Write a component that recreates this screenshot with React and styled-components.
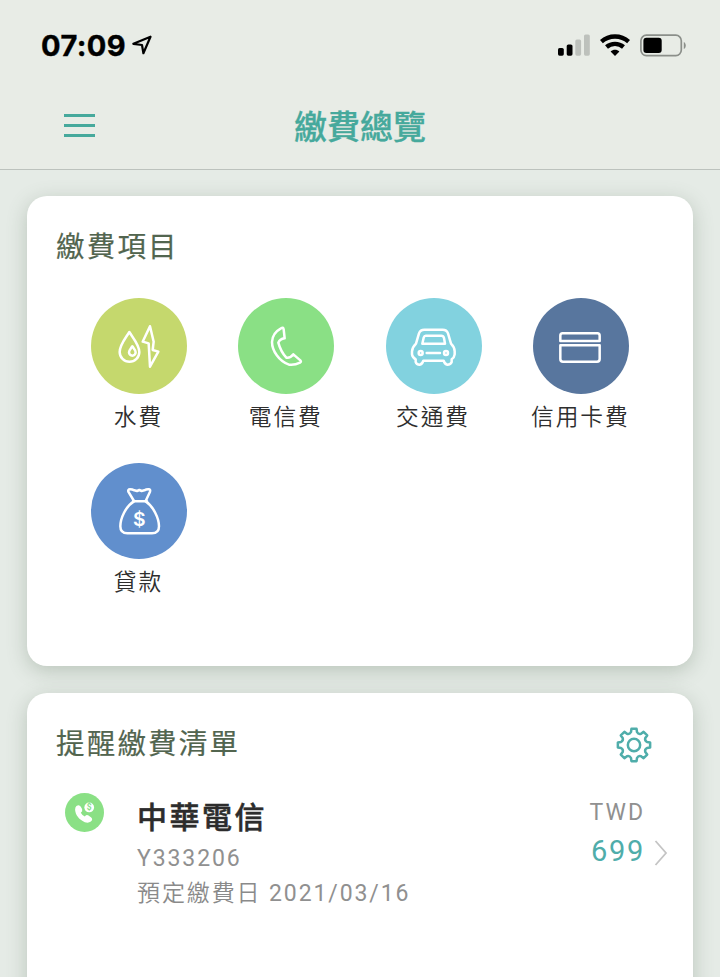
import styled, { createGlobalStyle } from 'styled-components';

const GlobalStyle = createGlobalStyle`
  * {
    box-sizing: border-box;
  }
  html, body {
    margin: 0;
    height: 977px;
    overflow: hidden;
    background: #e5ebe6;
    font-family: Roboto, 'Noto Sans CJK TC', sans-serif;
  }
  svg {
    display: block;
    flex: none;
  }
`;

const Screen = styled.div`
  width: 720px;
  height: 977px;
  overflow: hidden;
`;

const Header = styled.header`
  height: 170px;
  background: #e8ece6;
  border-bottom: 1.5px solid #bcc2bd;
`;

const StatusBar = styled.div`
  display: flex;
  align-items: center;
  height: 90px;
  padding: 0 34px 0 41px;
`;

const Clock = styled.span`
  width: 91px;
  padding-top: 2px;
  font: 700 29px/34px Inter, sans-serif;
  letter-spacing: 0.4px;
  -webkit-text-stroke: 0.4px #000;
  color: #000;
`;

const StatusIcons = styled.div`
  display: flex;
  align-items: center;
  gap: 10px;
  margin-left: auto;
`;

const NavBar = styled.div`
  display: grid;
  grid-template-columns: 160px 1fr 160px;
  align-items: center;
  height: 72px;
`;

const MenuButton = styled.button`
  display: flex;
  flex-direction: column;
  gap: 6.7px;
  width: 31px;
  margin: 0 0 1px 64px;
  padding: 0;
  border: 0;
  background: none;

  span {
    height: 3.4px;
    background: #46a99c;
  }
`;

const Title = styled.h1`
  margin: 0;
  padding-top: 4px;
  text-align: center;
  font-size: 33px;
  line-height: 48px;
  font-weight: 500;
  -webkit-text-stroke: 0.3px #46a99c;
  color: #46a99c;
`;

const Content = styled.main`
  display: flex;
  flex-direction: column;
  gap: 27px;
  padding: 26px 27px 0;
`;

const Card = styled.section`
  height: ${(props) => props.$height}px;
  padding: 31px 29px 0;
  border-radius: 20px;
  background: #fff;
  box-shadow: 0 5px 20px rgba(85, 110, 85, 0.3);
`;

const CardHead = styled.div`
  display: flex;
  align-items: center;
  justify-content: space-between;
  height: 42px;
  padding-right: 12px;
`;

const CardTitle = styled.h2`
  margin: 0;
  font-size: 28.5px;
  line-height: 42px;
  font-weight: 400;
  letter-spacing: 2.2px;
  -webkit-text-stroke: 0.2px #52654f;
  color: #52654f;
`;

const Tiles = styled.div`
  display: grid;
  grid-template-columns: repeat(4, 147.3px);
  grid-auto-rows: 165px;
  margin: 28.5px 0 0 9.3px;
`;

const Tile = styled.div`
  display: flex;
  flex-direction: column;
  align-items: center;
`;

const Circle = styled.div`
  width: 96px;
  height: 96px;
  border-radius: 50%;
  background: ${(props) => props.$color};
`;

const TileLabel = styled.span`
  margin: 7px 1px 0 0;
  font-size: 22.7px;
  line-height: 34px;
  font-weight: 350;
  letter-spacing: 2px;
  white-space: nowrap;
  color: #2e2e2e;
`;

const Bill = styled.div`
  display: grid;
  grid-template-columns: 72px 1fr auto 24px;
  margin: 27px 0 0 9px;
`;

const BillInfo = styled.div`
  padding-top: 2px;
`;

const BillName = styled.div`
  font-size: 30px;
  line-height: 46px;
  font-weight: 500;
  letter-spacing: 2.5px;
  -webkit-text-stroke: 0.5px #2c2c2c;
  color: #2c2c2c;
`;

const BillNote = styled.div`
  font-size: 23px;
  line-height: 35px;
  font-weight: 350;
  letter-spacing: 1.9px;
  color: #8a8a8a;

  span {
    font-weight: 400;
    color: #909090;
  }
`;

const Amount = styled.div`
  margin-right: -5px;
  padding-top: 2px;
  text-align: right;
  color: #909090;
  font-size: 23px;
  line-height: 36px;
  letter-spacing: 2px;

  strong {
    display: block;
    line-height: 40px;
    font-size: 29px;
    font-weight: 400;
    letter-spacing: 1.7px;
    color: #4fadaa;
  }
`;

const Arrow = styled.div`
  padding: 46px 0 0 14px;
`;

const LocationIcon = () => (
  <svg width="20" height="20" viewBox="0 0 20 20" fill="none" stroke="#000" strokeWidth="2.2" strokeLinejoin="round">
    <path d="M18.5 1.7 1.4 8.8 10 10 11.4 18.2Z" />
  </svg>
);

const SignalIcon = () => (
  <svg width="32" height="22" viewBox="0 0 32 22">
    <rect y="14" width="5.8" height="7.7" rx="1.6" />
    <rect x="8.7" y="10.4" width="5.8" height="11.3" rx="1.6" />
    <rect x="17.3" y="5.5" width="5.8" height="16.2" rx="1.6" fill="#bdc1bc" />
    <rect x="26" y="0.5" width="5.8" height="21.2" rx="1.6" fill="#bdc1bc" />
  </svg>
);

const WifiIcon = () => (
  <svg width="30" height="22" viewBox="0 0 30 22" fill="none" stroke="#000" strokeWidth="4.4">
    <path d="M1.4 7.6C9 .8 21 .8 28.6 7.6" />
    <path d="M6.5 13C11.3 8.8 18.7 8.8 23.5 13" />
    <path d="M10.6 17.4C13.2 15.2 16.8 15.2 19.4 17.4L15 22Z" fill="#000" stroke="none" />
  </svg>
);

const BatteryIcon = () => (
  <svg width="46" height="23" viewBox="0 0 46 23">
    <rect x="0.9" y="1.2" width="40.4" height="20.4" rx="5.5" fill="none" stroke="#8b8f8a" strokeWidth="1.7" />
    <rect x="3.4" y="3.8" width="18.3" height="15.2" rx="3" />
    <path d="M43.8 8v7c2.6-1 2.6-6 0-7Z" fill="#8b8f8a" />
  </svg>
);

const LineIcon = ({ children }) => (
  <svg
    width="96"
    height="96"
    viewBox="0 0 288 288"
    fill="none"
    stroke="#fff"
    strokeWidth="7.5"
    strokeLinejoin="round"
    strokeLinecap="round"
  >
    {children}
  </svg>
);

const UtilityIcon = () => (
  <LineIcon>
    <path d="M115 102C104 120 86 141 86 162a29.5 29.5 0 0 0 59 0C145 141 126 120 115 102Z" />
    <path d="M124 145C119 152 114 157 114 163a10 10 0 0 0 20 0C134 157 129 152 124 145Z" />
    <path d="M177 85 155 131 173 136 177 206 202 161 185 156 188 131Z" />
  </LineIcon>
);

const PhoneIcon = () => (
  <LineIcon>
    <path d="M129 91Q136 86 137 94L140 121Q125 123 121 134Q128 161 145 179Q157 181 166 169L187 187Q191 191 186 194Q170 202 153 200C123 190 102 158 102 132Q103 105 129 91Z" />
  </LineIcon>
);

const CarIcon = () => (
  <LineIcon>
    <path d="M115 95H170Q182 95 186 106L195 137Q206 148 206 160V169Q205 178 197 184V192Q194 200 184 200Q176 199 173 188H112Q109 199 101 200Q91 200 89 192V184Q79 178 78 169V160Q79 148 90 137L99 106Q103 95 115 95Z" />
    <path d="M119 113H166Q172 113 174 120L177 137H109L113 119Q115 113 119 113Z" />
    <circle cx="104" cy="165" r="6" />
    <circle cx="180" cy="165" r="6" />
    <path d="M122 165H162" />
  </LineIcon>
);

const CreditCardIcon = () => (
  <LineIcon>
    <path d="M82 129V113Q82 106 89 106H193Q200 106 200 113V129Z" />
    <path d="M82 142H200V183Q200 191 192 191H90Q82 191 82 183Z" />
  </LineIcon>
);

const LoanIcon = () => (
  <LineIcon>
    <path d="M126 115H168M129 114 112 86Q110 79 117 79Q124 79 130 82L138 84L145 81L152 84L160 82Q167 78 174 79Q179 80 177 86L164 114" />
    <path d="M129 115C104 130 88 166 88 190Q88 211 109 211H183Q204 211 204 190C204 166 187 130 164 115" />
    <text
      x="145"
      y="188"
      fill="#fff"
      stroke="none"
      textAnchor="middle"
      fontFamily="Inter"
      fontSize="58"
      fontWeight="600"
    >
      $
    </text>
  </LineIcon>
);

const toothPoint = (radius, degrees) => {
  const angle = (degrees * Math.PI) / 180;
  return `${(54 + radius * Math.sin(angle)).toFixed(1)} ${(54 - radius * Math.cos(angle)).toFixed(1)}`;
};

const gearPath = [0, 45, 90, 135, 180, 225, 270, 315]
  .map(
    (a) =>
      `${a ? 'L' : 'M'}${toothPoint(40, a - 13)}L${toothPoint(49, a - 9)}L${toothPoint(49, a + 9)}` +
      `L${toothPoint(40, a + 13)}Q${toothPoint(34, a + 22.5)} ${toothPoint(40, a + 32)}`
  )
  .join('');

const GearIcon = () => (
  <svg width="36" height="36" viewBox="0 0 108 108" fill="none" stroke="#4fadaa" strokeWidth="7.5" strokeLinejoin="round">
    <path d={`${gearPath}Z`} />
    <circle cx="54" cy="54" r="18.5" />
  </svg>
);

const TelecomBadge = () => (
  <svg width="39" height="39" viewBox="0 0 116 116">
    <circle cx="58" cy="58" r="58" fill="#8ae085" />
    <path
      d="M34 39Q42 33 47 41L51 48Q53 54 47 59Q51 67 59 70Q64 63 70 67L78 73Q84 79 77 85Q70 90 59 87C41 79 31 65 30 50Q30 43 34 39Z"
      fill="#fff"
    />
    <circle cx="72" cy="43" r="14.5" fill="#fff" />
    <text x="72" y="52" fill="#8ae085" textAnchor="middle" fontFamily="Roboto" fontSize="25" fontWeight="700">
      $
    </text>
  </svg>
);

const ChevronIcon = () => (
  <svg width="14" height="28" viewBox="0 0 14 28" fill="none" stroke="#c4c4c4" strokeWidth="1.8">
    <path d="M1.5 2 12 14 1.5 26" />
  </svg>
);

const categories = [
  { label: '水費', color: '#c5d86d', Icon: UtilityIcon },
  { label: '電信費', color: '#8ae085', Icon: PhoneIcon },
  { label: '交通費', color: '#82d2df', Icon: CarIcon },
  { label: '信用卡費', color: '#58769e', Icon: CreditCardIcon },
  { label: '貸款', color: '#618fcd', Icon: LoanIcon },
];

const App = () => {
  return (
    <Screen>
      <GlobalStyle />
      <Header>
        <StatusBar>
          <Clock>07:09</Clock>
          <LocationIcon />
          <StatusIcons>
            <SignalIcon />
            <WifiIcon />
            <BatteryIcon />
          </StatusIcons>
        </StatusBar>
        <NavBar>
          <MenuButton aria-label="選單">
            <span />
            <span />
            <span />
          </MenuButton>
          <Title>繳費總覽</Title>
        </NavBar>
      </Header>
      <Content>
        <Card $height={470}>
          <CardHead>
            <CardTitle>繳費項目</CardTitle>
          </CardHead>
          <Tiles>
            {categories.map(({ label, color, Icon }) => (
              <Tile key={label}>
                <Circle $color={color}>
                  <Icon />
                </Circle>
                <TileLabel>{label}</TileLabel>
              </Tile>
            ))}
          </Tiles>
        </Card>
        <Card $height={400}>
          <CardHead>
            <CardTitle>提醒繳費清單</CardTitle>
            <GearIcon />
          </CardHead>
          <Bill>
            <TelecomBadge />
            <BillInfo>
              <BillName>中華電信</BillName>
              <BillNote>
                <span>Y333206</span>
              </BillNote>
              <BillNote>
                預定繳費日 <span>2021/03/16</span>
              </BillNote>
            </BillInfo>
            <Amount>
              TWD
              <strong>699</strong>
            </Amount>
            <Arrow>
              <ChevronIcon />
            </Arrow>
          </Bill>
        </Card>
      </Content>
    </Screen>
  );
};

export default App;
